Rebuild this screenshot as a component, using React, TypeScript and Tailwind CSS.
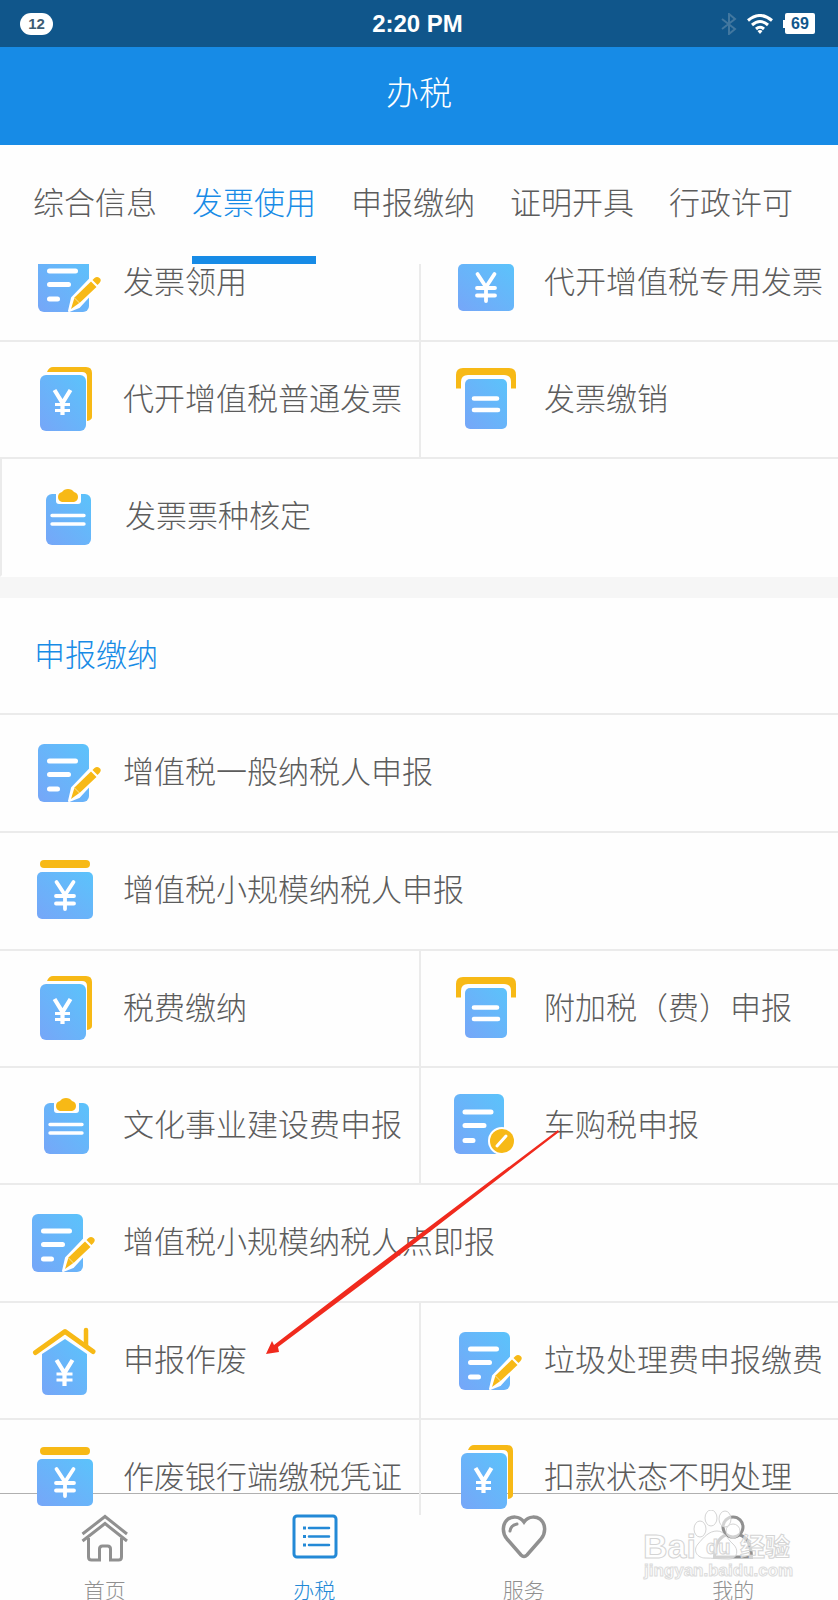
import { useState } from 'react';
import type { ReactNode } from 'react';
import clsx from 'clsx';

type IconName = 'pencil' | 'pencilEdge' | 'card' | 'stack' | 'slot' | 'clipboard' | 'badge' | 'house';

interface Service {
  label: string;
  icon: IconName;
  wide?: boolean;
  leftLine?: boolean;
}

const TABS = ['综合信息', '发票使用', '申报缴纳', '证明开具', '行政许可'];

const INVOICE: Service[] = [
  { label: '发票领用', icon: 'pencil' },
  { label: '代开增值税专用发票', icon: 'card', leftLine: true },
  { label: '代开增值税普通发票', icon: 'stack' },
  { label: '发票缴销', icon: 'slot', leftLine: true },
  { label: '发票票种核定', icon: 'clipboard', wide: true, leftLine: true },
];

const DECLARE: Service[] = [
  { label: '增值税一般纳税人申报', icon: 'pencil', wide: true },
  { label: '增值税小规模纳税人申报', icon: 'card', wide: true },
  { label: '税费缴纳', icon: 'stack' },
  { label: '附加税（费）申报', icon: 'slot', leftLine: true },
  { label: '文化事业建设费申报', icon: 'clipboard' },
  { label: '车购税申报', icon: 'badge', leftLine: true },
  { label: '增值税小规模纳税人点即报', icon: 'pencilEdge', wide: true },
  { label: '申报作废', icon: 'house' },
  { label: '垃圾处理费申报缴费', icon: 'pencil', leftLine: true },
  { label: '作废银行端缴税凭证', icon: 'card' },
  { label: '扣款状态不明处理', icon: 'stack', leftLine: true },
];

const GOLD = '#f7b916';
const BLUE = 'url(#tile)';

function Pencil() {
  return (
    <>
      <rect x="10" y="14" width="51" height="58" rx="6" fill={BLUE} />
      <path d="M21.500 31h26M21.500 44.500h19M21.500 59h8" stroke="#fff" strokeWidth="5" strokeLinecap="round" />
      <path d="M41 71l3-13L65 36q4-3 7 1t0 7L51 67z" fill="#fff" stroke="#fff" strokeWidth="2" strokeLinejoin="round" />
      <path d="M43 69l3.500-11.500L63 41.500l5.500 5.500L52 62.500z" fill={GOLD} />
      <path d="M64.500 40l2-2q2.500-2 5 0t0 5l-2 2z" fill={GOLD} />
      <path d="M46.500 58l5 5" stroke="#fbe3a0" />
    </>
  );
}

const ART: Record<IconName, ReactNode> = {
  pencil: <Pencil />,
  pencilEdge: (
    <g transform="translate(-6 0)">
      <Pencil />
    </g>
  ),
  card: (
    <>
      <rect x="12" y="12" width="50" height="8" rx="4" fill={GOLD} />
      <rect x="9" y="24" width="56" height="47" rx="5" fill={BLUE} />
      <path d="M28.500 34l8.500 13 8.500-13M37 47v14M28 48h18M28 55.500h18" stroke="#fff" strokeWidth="3.800" strokeLinecap="round" fill="none" />
    </>
  ),
  stack: (
    <>
      <path d="M19 15q2-5 6-5h33q6 0 6 6v44q0 3-5 4V20q0-5-5-5z" fill={GOLD} />
      <rect x="12" y="18" width="46" height="56" rx="6" fill={BLUE} />
      <path d="M26.500 33l8 13 8-13M34.500 46v12" stroke="#fff" strokeWidth="4.200" fill="none" />
      <path d="M27 47.500h15M27 53.500h15" stroke="#fff" strokeWidth="3" />
    </>
  ),
  slot: (
    <>
      <path d="M7 31.500V18q0-7 7-7h46q7 0 7 7v13.500h-5V25q0-7-7-7H19q-7 0-7 7v6.500z" fill={GOLD} />
      <rect x="16" y="22" width="42" height="50" rx="5" fill={BLUE} />
      <path d="M25 41.500h23M25 53h24" stroke="#fff" strokeWidth="4.600" strokeLinecap="round" />
    </>
  ),
  clipboard: (
    <>
      <rect x="16" y="20" width="45" height="51" rx="6" fill={BLUE} />
      <path d="M26 18h25v9q0 3-3 3H29q-3 0-3-3z" fill="#fff" />
      <path d="M32 18q2-3 6-3t6 3q4 1 4 5t-4 5H32q-4-1-4-5t4-5z" fill={GOLD} />
      <path d="M22 41.500h32M22 50h32" stroke="#fff" strokeWidth="3.400" strokeLinecap="round" />
    </>
  ),
  badge: (
    <>
      <rect x="5" y="11" width="50" height="60" rx="6" fill={BLUE} />
      <path d="M16 29h26M16 42.500h19M16 57.500h8" stroke="#fff" strokeWidth="5" strokeLinecap="round" />
      <circle cx="53" cy="58" r="14" fill="#fff" />
      <circle cx="53" cy="58" r="12" fill={GOLD} />
      <path d="M48 63l9-10" stroke="#fff" strokeWidth="3" strokeLinecap="round" />
    </>
  ),
  house: (
    <>
      <path d="M58 27V12" stroke={GOLD} strokeWidth="4.500" strokeLinecap="round" />
      <path d="M7.500 34.500L37 13.500l28 20" stroke={GOLD} strokeWidth="5" strokeLinecap="round" strokeLinejoin="round" fill="none" />
      <path d="M37 21l22 15v35q0 6-6 6H20q-6 0-6-6V36z" fill={BLUE} />
      <path d="M28.500 42l8 13 8-13M36.500 55v13" stroke="#fff" strokeWidth="4.200" fill="none" />
      <path d="M28.500 56h16M28.500 62h16" stroke="#fff" strokeWidth="3" />
    </>
  ),
};

function ServiceCell({ item, last }: { item: Service; last?: boolean }) {
  return (
    <button
      type="button"
      className={clsx(
        'flex items-center gap-[15px] pl-7 pt-[15px] text-left border-[#ebebeb]',
        item.wide ? 'col-span-2 pb-[21px]' : !last && 'pb-5',
        !last && 'border-b-2',
        item.leftLine && 'border-l-2',
        item.wide && item.leftLine && 'border-b-transparent',
      )}
    >
      <svg viewBox="0 0 80 80" className="w-20 h-20 shrink-0" fill="none" aria-hidden="true">
        {ART[item.icon]}
      </svg>
      <span className="whitespace-nowrap">{item.label}</span>
    </button>
  );
}

function StatusBar() {
  return (
    <div className="grid grid-cols-3 items-center h-[47px] pl-5 pr-[23px] bg-[#10568b] text-white font-['Liberation_Sans',sans-serif] font-bold">
      <span className="justify-self-start w-[33px] rounded-full bg-white text-center text-[15px] leading-[22px] text-[#3d5c72]">
        12
      </span>
      <span className="text-center text-2xl whitespace-nowrap">2:20 PM</span>
      <div className="flex items-center justify-end gap-2.5">
        <svg viewBox="0 0 16 22" className="w-4 h-[22px]" fill="none" stroke="#42779f" strokeWidth="2" aria-hidden="true">
          <path d="M1 6l13 10-6 5V1l6 5L1 16" />
        </svg>
        <svg viewBox="0 0 26 20" className="w-[26px] h-5" fill="none" stroke="#fff" strokeWidth="3" aria-hidden="true">
          <path d="M1 6.500q12-10 24 0M5 11q8-7 16 0M9 15q4-3.500 8 0" />
          <path d="M10.500 17q2.500-2 5 0L13 20z" fill="#fff" stroke="none" />
        </svg>
        <span className="flex items-center">
          <i className="w-0.5 h-2 bg-white" />
          <span className="w-[30px] rounded-xs bg-white text-center text-base leading-[21px] text-[#10568b]">69</span>
        </span>
      </div>
    </div>
  );
}

const NAV: { label: string; icon: ReactNode }[] = [
  {
    label: '首页',
    icon: (
      <>
        <path d="M1.500 20L24 2.500 46 20M1.500 27L24 9.500 46 27" />
        <path d="M7.500 24v19q0 3 3 3h8V35q0-3 3-3h5q3 0 3 3v11h8q3 0 3-3V24" />
      </>
    ),
  },
  {
    label: '办税',
    icon: (
      <>
        <rect x="4" y="2" width="42" height="41" rx="3" />
        <path d="M19 14h20M19 22.500h20M19 31h20" strokeWidth="2.500" strokeLinecap="round" />
        <path d="M13 14h3M13 22.500h3M13 31h3" />
      </>
    ),
  },
  {
    label: '服务',
    icon: (
      <>
        <path d="M24 8C19 1 11 3 8 5c-6 5-6 14-1 20l14 16q3 3 6 0l14-16c5-6 5-15-1-20-3-2-11-4-16 3z" strokeWidth="3.500" />
        <path d="M10 17q1-6 7-7" strokeLinecap="round" />
      </>
    ),
  },
  {
    label: '我的',
    icon: (
      <>
        <circle cx="24" cy="13" r="10" />
        <path d="M17 21Q6 25 5.500 43h37Q42 25 31 21" />
      </>
    ),
  },
];

function BottomNav({ current }: { current: string }) {
  return (
    <nav className="grid grid-cols-4 -mt-[22px] pt-5 border-t border-[#b0b0b0]">
      {NAV.map(({ label, icon }) => (
        <a
          key={label}
          href="#"
          className={clsx(
            'flex flex-col items-center gap-[17px] text-[21px] leading-[21px]',
            label === current ? 'text-[#2389d6]' : 'text-[#909090]',
          )}
        >
          <svg viewBox="0 0 48 48" className="w-12 h-12" fill="none" stroke="currentColor" strokeWidth="3" aria-hidden="true">
            {icon}
          </svg>
          {label}
        </a>
      ))}
    </nav>
  );
}

function Watermark() {
  return (
    <svg
      viewBox="0 0 156 76"
      className="absolute bottom-[14px] right-[40px] w-[156px] h-[76px] pointer-events-none font-['Liberation_Sans','Noto_Sans_CJK_SC',sans-serif] font-bold"
      fill="#fff"
      fillOpacity="0.6"
      stroke="#d4d4d4"
      strokeWidth="1"
      aria-hidden="true"
    >
      <text x="1" y="48" fontSize="34">Bai</text>
      <ellipse cx="58" cy="19" rx="6" ry="8" />
      <ellipse cx="69" cy="8" rx="6" ry="8" />
      <ellipse cx="83" cy="9" rx="6" ry="8" />
      <ellipse cx="91" cy="21" rx="7" ry="7" />
      <path d="M75 21c8 0 10 8 16 13s5 15-4 15-17-1-24-1-13-7-7-14 11-13 19-13z" />
      <text x="64" y="44" fontSize="20">du</text>
      <text x="98" y="46" fontSize="25">经验</text>
      <text x="2" y="66" fontSize="17" stroke="#dcdcdc">jingyan.baidu.com</text>
    </svg>
  );
}

export default function App() {
  const [tab, setTab] = useState('发票使用');

  return (
    <div className="relative min-h-screen overflow-hidden bg-[#fefefe] font-['Noto_Sans_CJK_SC',sans-serif] font-light text-[31px] leading-[48px] text-[#5c5c5c]">
      <svg className="absolute w-0 h-0" aria-hidden="true">
        <linearGradient id="tile" x1="1" y1="0" x2="0" y2="1">
          <stop offset="0" stopColor="#5bc3fb" />
          <stop offset="1" stopColor="#76a6f8" />
        </linearGradient>
      </svg>

      {/* Header and tabs stay above the scrolled list */}
      <header className="relative z-20 bg-[#fefefe]">
        <StatusBar />
        <h1 className="bg-[#178be6] pt-5 pb-[30px] text-center text-[33px] text-white">办税</h1>
        <div role="tablist" className="flex gap-[35px] pl-[33px] pr-5">
          {TABS.map(name => (
            <button
              key={name}
              type="button"
              role="tab"
              aria-selected={name === tab}
              onClick={() => setTab(name)}
              className={clsx(
                'pt-8 pb-[31px] border-b-8 whitespace-nowrap',
                name === tab ? 'border-[#178be6] text-[#178be6]' : 'border-transparent',
              )}
            >
              {name}
            </button>
          ))}
        </div>
      </header>

      <main className="relative z-10 -mt-[39px]">
        <section className="grid grid-cols-2">
          {INVOICE.map(item => (
            <ServiceCell key={item.label} item={item} />
          ))}
        </section>
        <div className="h-[21px] bg-[#f6f6f6]" />
        <h2 className="pt-[15px] pb-5 pl-[34px] border-b-2 border-[#ebebeb] leading-[80px] text-[#178be6]">申报缴纳</h2>
        <section className="grid grid-cols-2">
          {DECLARE.map((item, i) => (
            <ServiceCell key={item.label} item={item} last={i >= DECLARE.length - 2} />
          ))}
        </section>
      </main>

      <BottomNav current="办税" />
      <Watermark />

      {/* Pointer to 申报作废 */}
      <svg
        viewBox="0 0 300 230"
        className="absolute z-30 left-[262px] top-[1128px] w-[300px] h-[230px] pointer-events-none"
        aria-hidden="true"
      >
        <path d="M4 226l6-13 2 4 86-66L296 2l1 2L104 153l-88 66 1 5z" fill="#f02a1d" />
      </svg>
    </div>
  );
}
